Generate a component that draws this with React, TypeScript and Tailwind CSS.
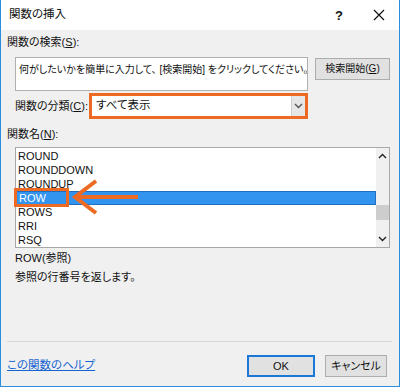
import React from 'react';

const fns = ['ROUND', 'ROUNDDOWN', 'ROUNDUP', 'ROW', 'ROWS', 'RRI', 'RSQ'];

const Chevron = ({ up = false, className = '' }: { up?: boolean; className?: string }) => (
  <svg width="9" height="6" viewBox="0 0 9 6" className={className}>
    <path d={up ? 'M1 5 L4.5 1.5 L8 5' : 'M1 1 L4.5 4.5 L8 1'} fill="none" stroke="currentColor" strokeWidth="1.4" />
  </svg>
);

const App = () => {
  return (
    <div className="relative w-[400px] h-[387px] flex flex-col bg-[#f0f0f0] border-x border-b border-[#2b8de0] text-[11px] text-[#111] font-['Liberation_Sans','Noto_Sans_CJK_JP',sans-serif] [font-feature-settings:'palt'] leading-none overflow-hidden">
      {/* Title bar */}
      <div className="h-[30px] shrink-0 bg-white flex items-center pl-2 pr-[14px]">
        <span className="text-[11.5px]">関数の挿入</span>
        <span className="ml-auto mr-[30px] text-[13px] font-semibold">?</span>
        <svg width="12" height="12" viewBox="0 0 12 12">
          <path d="M1 1 L11 11 M11 1 L1 11" stroke="#111" strokeWidth="1.2" />
        </svg>
      </div>

      {/* Body */}
      <div className="flex-1 flex flex-col pl-[6px] pr-[7px] pb-[9px]">
        <div className="mt-[4px] h-[16px] flex items-center">
          関数の検索(<span className="underline">S</span>):
        </div>

        <div className="mt-[7px] flex items-start">
          <div className="ml-[8px] w-[293px] h-[34px] bg-white border border-[#b0b0b0] px-[3px] pt-[7px] text-[10px] whitespace-nowrap overflow-hidden">
            何がしたいかを簡単に入力して、 [検索開始] をクリックしてください。
          </div>
          <button className="ml-[7px] mt-[1px] w-[75px] h-[22px] bg-[#e1e1e1] border border-[#adadad] flex items-center justify-center text-[10px] whitespace-nowrap">
            検索開始(<span className="underline">G</span>)
          </button>
        </div>

        <div className="mt-[2px] ml-[8px] w-[293px] flex items-center justify-between">
          <span>
            関数の分類(<span className="underline">C</span>):
          </span>
          <div className="w-[219px] h-[26px] border-[3px] border-[#ee6a22] bg-white flex items-stretch">
            <span className="flex-1 flex items-center pl-[4px] text-[11.5px]">すべて表示</span>
            <span className="w-[14px] bg-[#e6e6e6] border-l border-[#cfcfcf] flex items-center justify-center text-[#555]">
              <Chevron />
            </span>
          </div>
        </div>

        <div className="mt-[7px] h-[16px] flex items-center">
          関数名(<span className="underline">N</span>):
        </div>

        <div className="mt-[5px] ml-[8px] w-[375px] h-[101px] bg-white border border-[#a8a8a8] flex">
          <div className="flex-1 pt-[1px]">
            {fns.map((f) => (
              <div
                key={f}
                className={`h-[14px] flex items-center pl-[2px] ${
                  f === 'ROW' ? 'bg-[#3394f0] text-white border border-[#2170c0]' : ''
                }`}
              >
                {f}
              </div>
            ))}
          </div>
          <div className="w-[13px] bg-[#f0f0f0] flex flex-col items-center">
            <div className="h-[16px] flex items-center justify-center text-[#222]">
              <Chevron up />
            </div>
            <div className="flex-1 w-full pt-[41px]">
              <div className="h-[15px] w-full bg-[#cdcdcd]" />
            </div>
            <div className="h-[16px] flex items-center justify-center text-[#222]">
              <Chevron />
            </div>
          </div>
        </div>

        <div className="mt-[1px] ml-[8px] leading-[19px]">
          <div>ROW(参照)</div>
          <div>参照の行番号を返します。</div>
        </div>

        <div className="flex-1" />
        <div className="h-px bg-[#d9d9d9]" />

        <div className="mt-[13px] mr-[5px] flex items-center">
          <a className="text-[#1565d0] underline text-[11.5px]">この関数のヘルプ</a>
          <button className="ml-auto w-[68px] h-[22px] bg-[#e1e1e1] border-2 border-[#1a78d6] flex items-center justify-center">
            OK
          </button>
          <button className="ml-[10px] w-[62px] h-[22px] bg-[#e1e1e1] border border-[#adadad] flex items-center justify-center">
            キャンセル
          </button>
        </div>
      </div>

      {/* Annotation: box and arrow pointing at ROW */}
      <svg className="absolute left-0 top-0 pointer-events-none" width="400" height="387" viewBox="0 0 400 387">
        <rect x="14.5" y="189.5" width="52" height="16" fill="none" stroke="#ee6a22" strokeWidth="3" />
        <path d="M74 197 H137" stroke="#ee6a22" strokeWidth="4" />
        <path d="M95 181 L74 197 L95 213" fill="none" stroke="#ee6a22" strokeWidth="4" />
      </svg>
    </div>
  );
};

export default App;
